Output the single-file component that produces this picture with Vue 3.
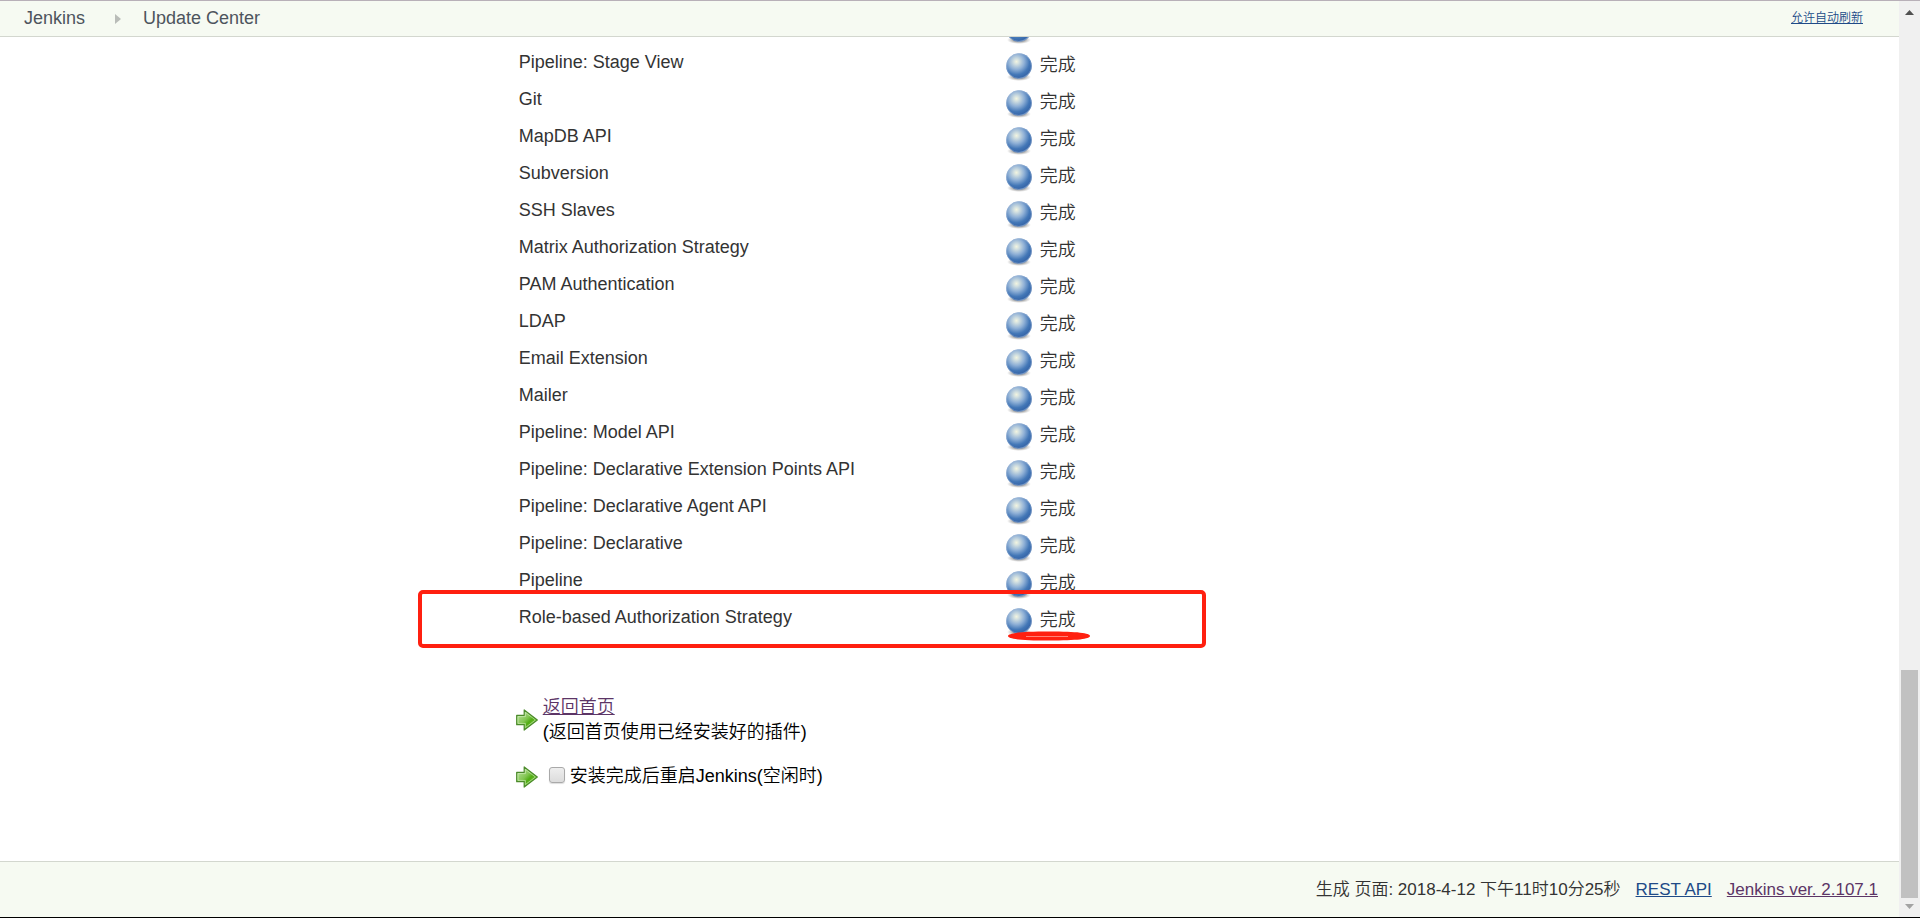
<script setup>
import { ref } from 'vue'

const plugins = [
  'Pipeline: Stage View',
  'Git',
  'MapDB API',
  'Subversion',
  'SSH Slaves',
  'Matrix Authorization Strategy',
  'PAM Authentication',
  'LDAP',
  'Email Extension',
  'Mailer',
  'Pipeline: Model API',
  'Pipeline: Declarative Extension Points API',
  'Pipeline: Declarative Agent API',
  'Pipeline: Declarative',
  'Pipeline',
  'Role-based Authorization Strategy',
]
const restart = ref(false)
</script>

<template>
  <div class="window">
    <svg class="defs" width="0" height="0" aria-hidden="true">
      <defs>
        <radialGradient id="ball" cx="0.4" cy="0.33" r="0.68">
          <stop offset="0" stop-color="#f3f5e0" />
          <stop offset="0.15" stop-color="#d3e0e0" />
          <stop offset="0.45" stop-color="#8fb0d6" />
          <stop offset="0.75" stop-color="#4377b7" />
          <stop offset="0.92" stop-color="#3868aa" />
          <stop offset="1" stop-color="#5d86bd" />
        </radialGradient>
        <radialGradient id="shade">
          <stop offset="0.5" stop-color="#555" stop-opacity="0.5" />
          <stop offset="1" stop-color="#888" stop-opacity="0" />
        </radialGradient>
        <linearGradient id="leaf" x1="0" y1="0" x2="1" y2="1">
          <stop offset="0" stop-color="#c5e5ac" />
          <stop offset="0.45" stop-color="#83c653" />
          <stop offset="0.6" stop-color="#52ad14" />
          <stop offset="1" stop-color="#8bd34e" />
        </linearGradient>
        <symbol id="status-ball" viewBox="0 0 26 28">
          <ellipse cx="13" cy="24" rx="12" ry="4" fill="url(#shade)" />
          <circle cx="13" cy="13" r="12.800" fill="url(#ball)" />
          <circle cx="13" cy="13" r="12.400" fill="none" stroke="#a5b9d6" stroke-opacity="0.4" />
        </symbol>
        <symbol id="go-arrow" viewBox="0 0 22 22">
          <path d="M.7 6.3H8.2V.9L21.3 11 8.2 21.1V15.7H.7Z" fill="url(#leaf)" stroke="#4b8a2b" stroke-width="1.2" stroke-linejoin="round" />
          <path d="M2 7.6H9.4V3.4L19.4 11 9.4 18.6V14.4H2Z" fill="none" stroke="#d6f0c2" stroke-opacity="0.6" />
        </symbol>
      </defs>
    </svg>

    <div class="viewport">
      <div class="page">
        <header class="breadcrumbs">
          <nav>
            <a href="#">Jenkins</a>
            <svg width="6" height="10" viewBox="0 0 6 10" aria-hidden="true"><path d="M0 0L6 5 0 10Z" fill="#b9bcb8" /></svg>
            <a href="#">Update Center</a>
          </nav>
          <a class="refresh" href="#">允许自动刷新</a>
        </header>

        <main>
          <div class="content">
            <table>
              <tbody>
                <tr>
                  <td class="name"></td>
                  <td><div class="status"><svg width="26" height="28"><use href="#status-ball" /></svg></div></td>
                </tr>
                <tr v-for="(name, i) in plugins" :key="name">
                  <td class="name">{{ name }}</td>
                  <td>
                    <div class="status">
                      <svg width="26" height="28" aria-hidden="true"><use href="#status-ball" /></svg>
                      <span>完成</span>
                    </div>
                    <template v-if="i === plugins.length - 1">
                      <div class="frame"></div>
                      <svg class="stroke" width="84" height="10" viewBox="0 0 84 10" aria-hidden="true">
                        <path d="M1 5C1 2 14 .5 42 .5S83 2 83 5 70 9.500 42 9.500 1 8 1 5Z" fill="#ff2010" />
                        <path d="M19 5.500H61" stroke="#ff8177" stroke-width="1" />
                      </svg>
                    </template>
                  </td>
                </tr>
              </tbody>
            </table>

            <div class="actions">
              <div class="action">
                <svg width="22" height="22" aria-hidden="true"><use href="#go-arrow" /></svg>
                <p><a href="#">返回首页</a><br />(返回首页使用已经安装好的插件)</p>
              </div>
              <div class="action">
                <svg width="22" height="22" aria-hidden="true"><use href="#go-arrow" /></svg>
                <input id="restart" v-model="restart" type="checkbox" />
                <label for="restart">安装完成后重启Jenkins(空闲时)</label>
              </div>
            </div>
          </div>
        </main>

        <footer>
          <span>生成 页面: 2018-4-12 下午11时10分25秒</span>
          <a href="#">REST API</a>
          <a class="visited" href="#">Jenkins ver. 2.107.1</a>
        </footer>
      </div>

      <div class="scrollbar" aria-hidden="true">
        <svg width="9" height="5" viewBox="0 0 9 5"><path d="M0 5L4.500 0 9 5Z" fill="#505050" /></svg>
        <div class="track"><div class="thumb"></div></div>
        <svg width="9" height="5" viewBox="0 0 9 5"><path d="M0 0L4.500 5 9 0Z" fill="#a3a3a3" /></svg>
      </div>
    </div>
  </div>
</template>

<style>
body {
  margin: 0;
  background: #fff;
}
</style>

<style scoped>
.window {
  box-sizing: border-box;
  height: 100vh;
  border-top: 1px solid #b8b0b8;
  border-bottom: 1px solid #000;
  font-family: "Liberation Sans", "Noto Sans CJK SC", sans-serif;
  font-size: 18px;
  font-weight: 350;
  color: #333;
}
.defs {
  position: absolute;
}
.viewport {
  display: flex;
  height: 100%;
}
.page {
  flex: 1;
  min-width: 0;
  display: flex;
  flex-direction: column;
}
.breadcrumbs {
  display: flex;
  align-items: center;
  justify-content: space-between;
  height: 35px;
  padding: 0 36px 0 24px;
  background: #f6faf2;
  border-bottom: 1px solid #d3d7cf;
}
nav {
  display: flex;
  align-items: center;
  padding-bottom: 1px;
  line-height: 20px;
}
nav svg {
  margin: 2px 22px 0 30px;
}
nav a {
  color: #4d545d;
  text-decoration: none;
}
.refresh {
  padding-bottom: 1px;
  font-size: 12px;
  line-height: 16px;
  color: #204a87;
}
main {
  flex: 1;
  min-height: 0;
  overflow: hidden;
  display: flex;
  flex-direction: column;
  justify-content: flex-end;
}
.content {
  display: flex;
  flex-direction: column;
  gap: 58px;
  margin-left: 27%;
  padding: 0 0 72px 3px;
}
table {
  width: 680px;
  border-collapse: collapse;
  table-layout: fixed;
}
tr {
  position: relative;
  height: 37px;
}
td {
  padding: 0;
  vertical-align: top;
}
.name {
  width: 487px;
  padding: 6px 0 0 3px;
  line-height: 22px;
}
.status {
  display: flex;
  gap: 8px;
  height: 28px;
  padding-top: 8px;
  line-height: 24px;
}
.frame {
  position: absolute;
  box-sizing: border-box;
  top: -10px;
  left: -98px;
  width: 788px;
  height: 58px;
  border: 4px solid #ff2010;
  border-radius: 5px;
}
.stroke {
  position: absolute;
  top: 31px;
  left: 491px;
}
.actions {
  display: flex;
  flex-direction: column;
  gap: 19px;
  color: #000;
}
.action {
  display: flex;
  align-items: center;
  line-height: 25px;
}
.action p {
  margin: 0 0 0 5px;
}
.action a,
.visited {
  color: #5c3566;
}
.action input {
  appearance: none;
  width: 16px;
  height: 16px;
  margin: 0 5px 4px 11px;
  border: 1px solid #a9a9a9;
  border-radius: 3px;
  background: linear-gradient(#eee, #dcdcdc);
  box-shadow: 0 1px 1px #ddd;
}
footer {
  display: flex;
  align-items: center;
  justify-content: flex-end;
  gap: 15px;
  height: 55px;
  padding-right: 21px;
  border-top: 1px solid #d3d7cf;
  background: #f6faf2;
  font-size: 17px;
  line-height: 20px;
}
footer a {
  color: #204a87;
}
footer .visited {
  color: #5c3566;
}
.scrollbar {
  box-sizing: border-box;
  width: 21px;
  display: flex;
  flex-direction: column;
  align-items: center;
  padding: 9px 0 8px;
  background: #f0f0f0;
}
.track {
  flex: 1;
  display: flex;
  flex-direction: column;
  justify-content: flex-end;
  padding: 7px 0 6px;
}
.thumb {
  width: 17px;
  height: 26%;
  background: #c1c1c1;
}
</style>
